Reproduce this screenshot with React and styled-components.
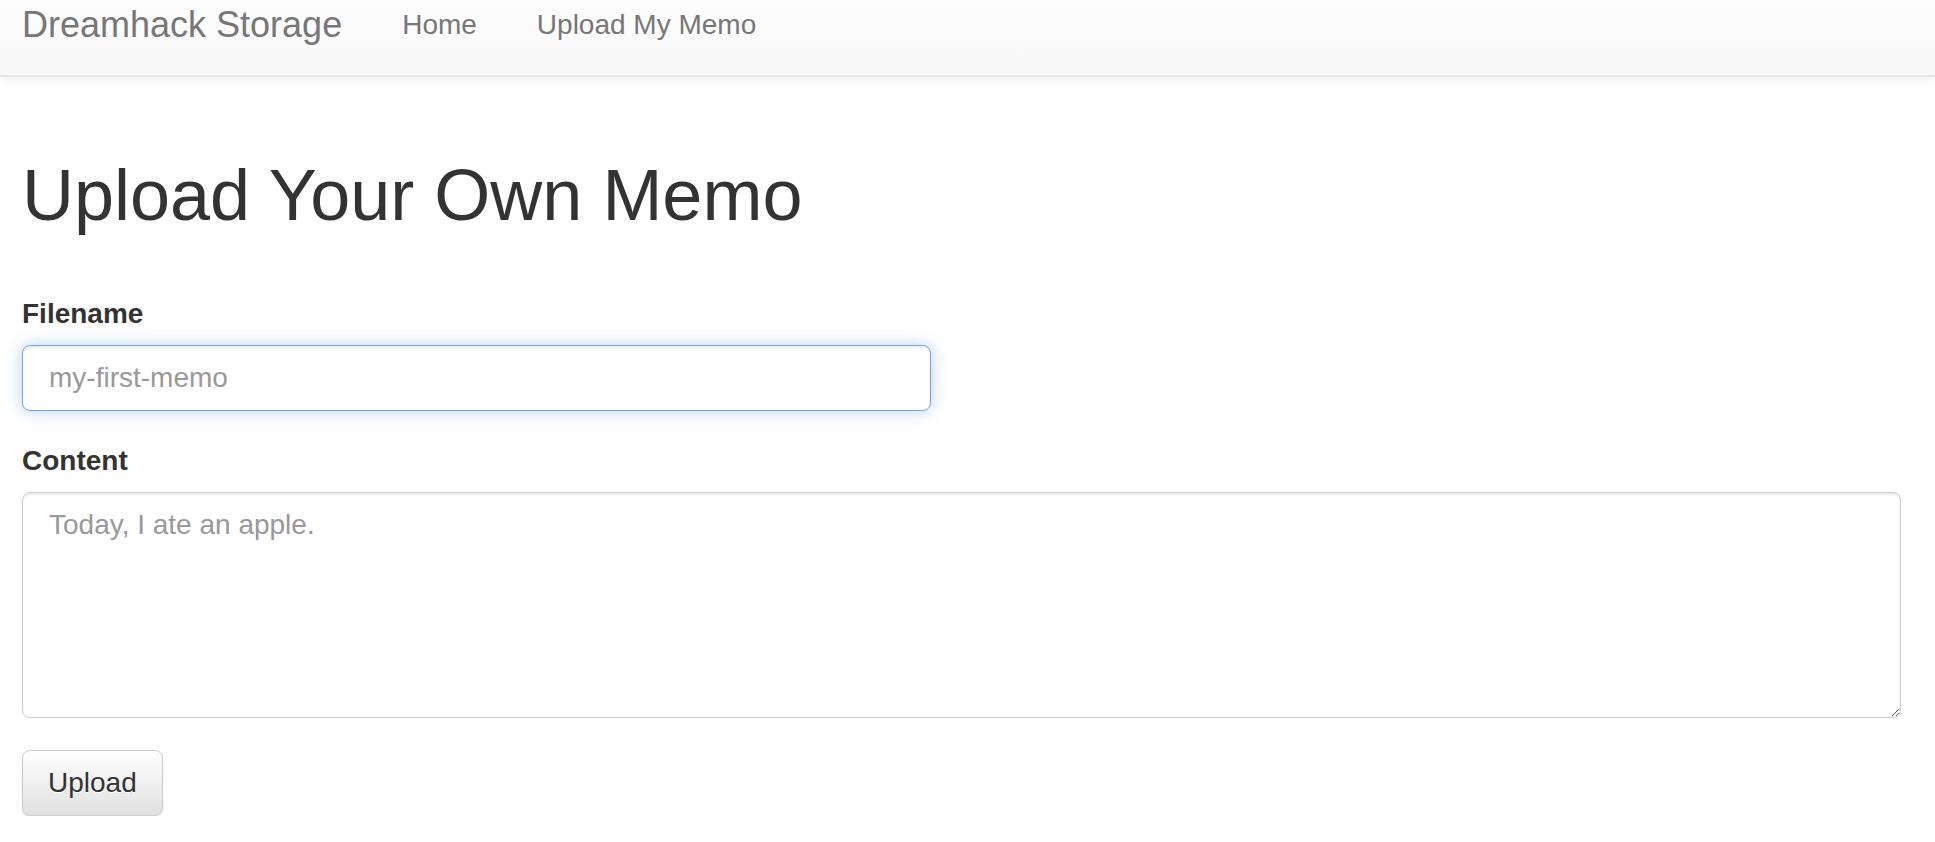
import React from 'react';
import styled, { createGlobalStyle } from 'styled-components';

const GlobalStyle = createGlobalStyle`
  html, body {
    margin: 0;
    padding: 0;
    background: #fff;
  }
  body {
    font-family: "Liberation Sans", Arial, Helvetica, sans-serif;
    font-size: 28px;
    line-height: 1.42857;
    color: #333;
  }
  * {
    box-sizing: border-box;
  }
`;

const Navbar = styled.nav`
  display: flex;
  align-items: flex-start;
  height: 77px;
  padding-left: 22px;
  background-image: linear-gradient(to bottom, #fdfdfd 0%, #f8f8f8 100%);
  border-bottom: 2px solid #e7e7e7;
  box-shadow: inset 0 2px 0 rgba(255, 255, 255, 0.15), 0 2px 10px rgba(0, 0, 0, 0.075);
  margin-bottom: 79px;
`;

const Brand = styled.a`
  padding: 5px 30px 0 0;
  font-size: 36px;
  line-height: 40px;
  color: #777;
  text-decoration: none;
  text-shadow: 0 1px 0 rgba(255, 255, 255, 0.25);
`;

const NavList = styled.ul`
  display: flex;
  list-style: none;
  margin: 0;
  padding: 0;
`;

const NavLink = styled.a`
  display: block;
  padding: 5px 30px 0;
  font-size: 28px;
  line-height: 40px;
  color: #777;
  text-decoration: none;
`;

const Container = styled.main`
  padding: 0 34px 0 22px;
`;

const Title = styled.h1`
  margin: 0 0 59px;
  font-size: 72px;
  font-weight: 500;
  line-height: 1.1;
  color: #333;
`;

const FormGroup = styled.div`
  margin-bottom: ${props => props.$gap || 30}px;
`;

const Label = styled.label`
  display: block;
  margin-bottom: 11px;
  font-size: 28px;
  font-weight: 700;
  line-height: 40px;
  color: #333;
`;

const TextInput = styled.input`
  display: block;
  width: 909px;
  height: 66px;
  padding: 12px 26px;
  font-family: inherit;
  font-size: 28px;
  line-height: 40px;
  color: #555;
  background: #fff;
  border: 1px solid #74a6e4;
  border-radius: 8px;
  outline: 0;
  box-shadow: inset 0 2px 2px rgba(0, 0, 0, 0.075), 0 0 16px rgba(102, 150, 233, 0.45);

  &::placeholder {
    color: #999;
  }
`;

const TextArea = styled.textarea`
  display: block;
  width: 100%;
  height: 226px;
  margin: 0;
  padding: 12px 26px;
  font-family: inherit;
  font-size: 28px;
  line-height: 40px;
  color: #555;
  background: #fff;
  border: 1px solid #ccc;
  border-radius: 8px;
  outline: 0;
  box-shadow: inset 0 2px 2px rgba(0, 0, 0, 0.075);

  &::placeholder {
    color: #999;
  }
`;

const Button = styled.button`
  display: inline-block;
  height: 66px;
  padding: 12px 25px;
  font-family: inherit;
  font-size: 28px;
  line-height: 40px;
  color: #333;
  background-image: linear-gradient(to bottom, #fff 0%, #e0e0e0 100%);
  border: 1px solid #ccc;
  border-radius: 8px;
  text-shadow: 0 1px 0 #fff;
  box-shadow: inset 0 2px 0 rgba(255, 255, 255, 0.15), 0 2px 2px rgba(0, 0, 0, 0.075);
  cursor: pointer;
`;

export default function App() {
  return (
    <>
      <GlobalStyle />
      <Navbar>
        <Brand href="#">Dreamhack Storage</Brand>
        <NavList>
          <li><NavLink href="#">Home</NavLink></li>
          <li><NavLink href="#">Upload My Memo</NavLink></li>
        </NavList>
      </Navbar>
      <Container>
        <Title>Upload Your Own Memo</Title>
        <form onSubmit={e => e.preventDefault()}>
          <FormGroup>
            <Label htmlFor="filename">Filename</Label>
            <TextInput id="filename" type="text" placeholder="my-first-memo" autoFocus />
          </FormGroup>
          <FormGroup $gap={32}>
            <Label htmlFor="content">Content</Label>
            <TextArea id="content" placeholder="Today, I ate an apple." />
          </FormGroup>
          <Button type="submit">Upload</Button>
        </form>
      </Container>
    </>
  );
}
